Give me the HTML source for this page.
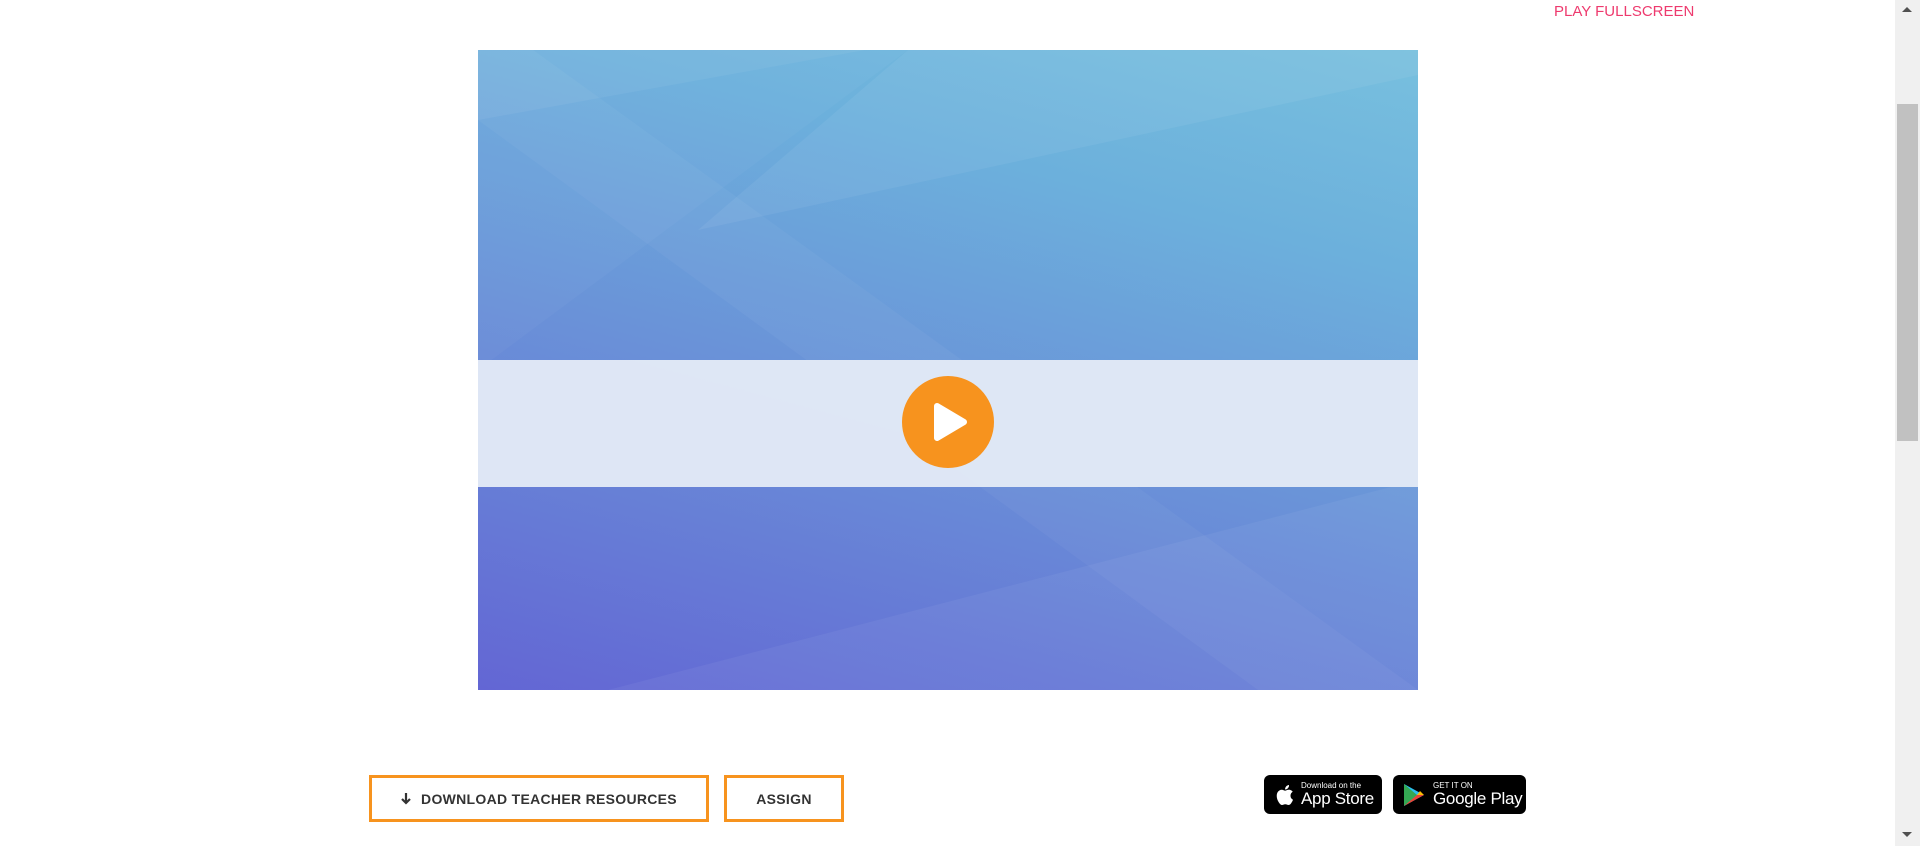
<!DOCTYPE html>
<html><head><style>
body{margin:0;width:1920px;height:846px;background:#fff;overflow:hidden;position:relative;font-family:"Liberation Sans",sans-serif}
.pf{position:absolute;left:1554px;top:3px;font-size:15px;color:#ee3a6e;white-space:nowrap}
.sb{position:absolute;left:1895px;top:0;width:25px;height:846px;background:#f0f0f0}
.thumb{position:absolute;left:1897px;top:104px;width:21px;height:337px;background:#c1c1c1}
.vid{position:absolute;left:478px;top:50px;width:940px;height:640px;overflow:hidden;background:linear-gradient(15deg,#6366d4 0%,#6a92d8 45%,#6cb0dc 75%,#78c0de 100%)}
.band{position:absolute;left:0;top:310px;width:940px;height:127px;background:#e2e9f6;opacity:.97}
.btn{position:absolute;top:775px;height:41px;border:3px solid #f7931e;box-sizing:content-box;display:flex;align-items:center;justify-content:center;font-weight:bold;font-size:14px;color:#333;letter-spacing:0.3px;white-space:nowrap}
.badge{position:absolute;top:775px;height:39px;background:#000;border-radius:6px;color:#fff;display:flex;align-items:center;white-space:nowrap}
</style></head><body>
<div class="pf">PLAY FULLSCREEN</div>
<div class="sb"></div><div class="thumb"></div>
<div style="position:absolute;left:1902px;top:7px;border:5px solid transparent;border-bottom:5px solid #505050;border-top:0"></div>
<div style="position:absolute;left:1902px;top:832px;border:5px solid transparent;border-top:5px solid #505050;border-bottom:0"></div>
<div class="vid">
<svg width="940" height="640" style="position:absolute;left:0;top:0">
<polygon points="0,70 940,-100 940,0 0,0" fill="#fff" opacity=".05"/>
<polygon points="220,180 940,25 940,0 430,0" fill="#fff" opacity=".06"/>
<polygon points="0,70 780,640 940,640 0,-40" fill="#fff" opacity=".04"/>
<polygon points="130,640 940,430 940,640" fill="#fff" opacity=".05"/>
<polygon points="0,320 430,0 0,0" fill="#fff" opacity=".03"/>
</svg>
<div class="band"></div>
<svg width="94" height="94" style="position:absolute;left:423px;top:325px"><circle cx="47" cy="47" r="46" fill="#f7931e"/><path d="M36 31 L63 47 L36 63 Z" fill="#fff" stroke="#fff" stroke-width="6" stroke-linejoin="round"/></svg>
</div>
<div class="btn" style="left:369px;width:334px"><svg width="10" height="12" viewBox="0 0 10 12" style="margin-right:10px"><path d="M5 0V10M1 6L5 10L9 6" stroke="#333" stroke-width="2.2" fill="none"/></svg>DOWNLOAD TEACHER RESOURCES</div>
<div class="btn" style="left:724px;width:114px">ASSIGN</div>
<div class="badge" style="left:1264px;width:118px"><svg width="20" height="24" viewBox="0 0 20 24" style="margin:0 7px 0 10px"><path d="M16.5 12.7c0-2.6 2.1-3.8 2.2-3.9-1.2-1.8-3.1-2-3.7-2-1.6-.2-3.1.9-3.9.9-.8 0-2-.9-3.3-.9-1.7 0-3.3 1-4.2 2.5-1.8 3.1-.5 7.7 1.3 10.2.8 1.2 1.8 2.6 3.1 2.5 1.3-.1 1.7-.8 3.3-.8 1.5 0 2 .8 3.3.8 1.4 0 2.2-1.2 3-2.5 1-1.4 1.4-2.8 1.4-2.9-.1 0-2.5-1-2.5-3.9zM14 5.1c.7-.8 1.2-2 1-3.1-1 0-2.2.7-2.9 1.5-.6.7-1.2 1.9-1 3 1.1.1 2.2-.6 2.9-1.4z" fill="#fff"/></svg><div style="line-height:1"><div style="font-size:8px">Download on the</div><div style="font-size:17px;letter-spacing:-0.3px">App Store</div></div></div>
<div class="badge" style="left:1393px;width:133px"><svg width="22" height="24" style="margin:0 8px 0 10px"><path d="M1 1 L21 12 L1 23 Z" fill="#2bc0f0"/><path d="M1 1 L14 12 L1 23Z" fill="#34a853"/><path d="M1 23 L14 12 L21 12Z" fill="#ea4335"/><path d="M14 12 L21 12 L17 8Z" fill="#fbbc04"/></svg><div style="line-height:1"><div style="font-size:8px">GET IT ON</div><div style="font-size:17px;letter-spacing:-0.3px">Google Play</div></div></div>
</body></html>
